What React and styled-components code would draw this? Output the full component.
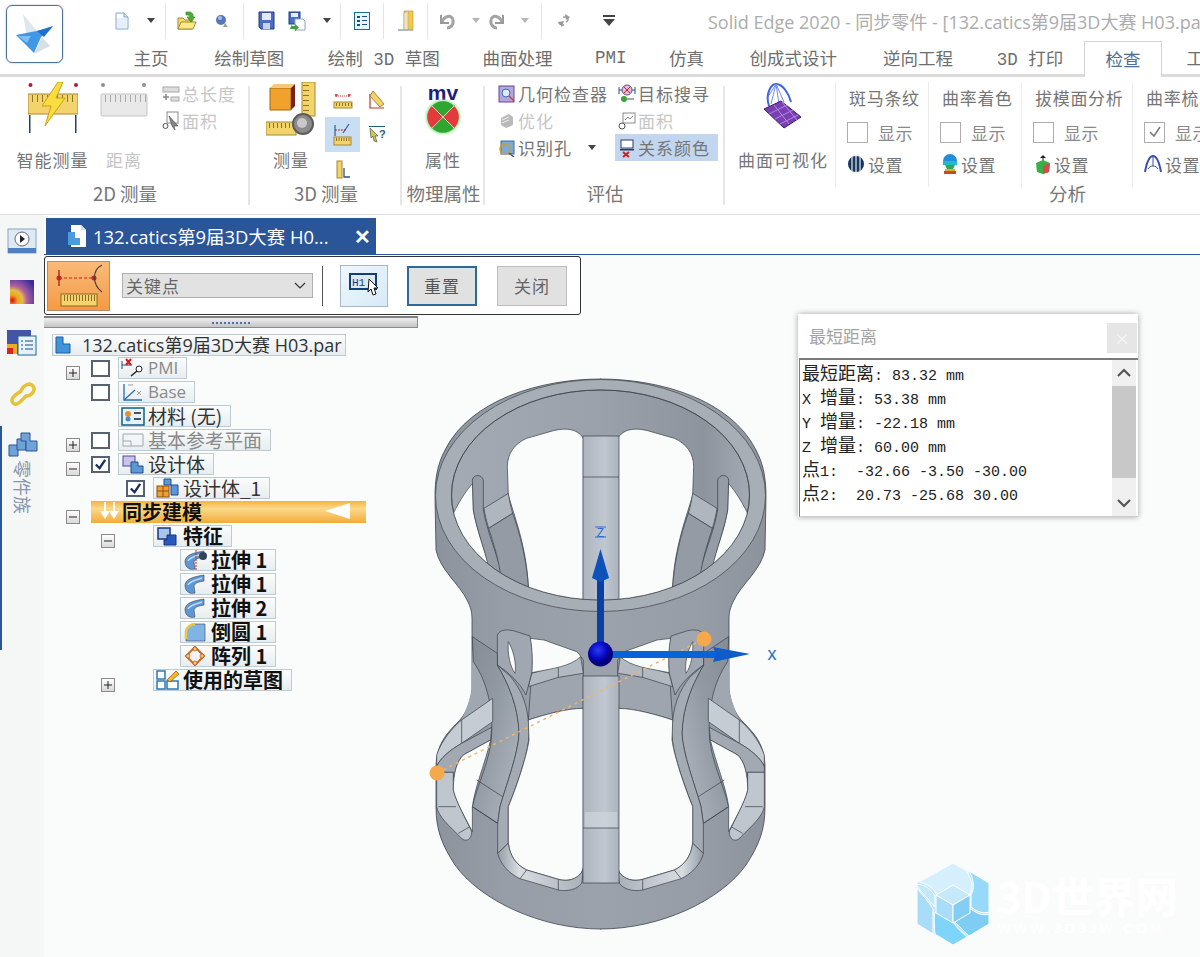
import React from 'react';
import styled, { createGlobalStyle } from 'styled-components';

const CJK = '"Noto Sans CJK SC", "Liberation Sans", sans-serif';
const MONO = '"Liberation Mono", "Noto Sans CJK SC", monospace';
const UI = '"Open Sans", "Noto Sans CJK SC", sans-serif';
const BG = '#fafcfc';

const Global = createGlobalStyle`
  html, body { margin: 0; padding: 0; background: #fff; }
  #root { width: 1200px; height: 957px; overflow: hidden; }
`;
const Page = styled.div`width:1200px;height:957px;overflow:hidden;display:flex;flex-direction:column;font-family:${CJK};background:#fff;`;

/* ---------- header ---------- */
const Header = styled.header`display:flex;height:74px;flex:none;background:#fff;`;
const Logo = styled.div`width:55px;height:56px;margin:5px 0 0 6px;border:1px solid #4d7096;border-radius:6px;box-shadow:0 0 2px #9db2c8;display:flex;align-items:center;justify-content:center;flex:none;`;
const HeaderMain = styled.div`flex:1;min-width:0;display:flex;flex-direction:column;`;
const QuickBar = styled.div`height:41px;display:flex;align-items:center;padding-left:45px;flex:none;white-space:nowrap;`;
const Slot = styled.div`width:${p => p.$w}px;height:32px;display:flex;align-items:center;justify-content:center;flex:none;`;
const Sep = styled.div`width:1px;height:36px;background:#e4e4e4;flex:none;`;
const Caret = styled.div`width:0;height:0;margin-left:${p => p.$ml || 0}px;border-left:4px solid transparent;border-right:4px solid transparent;border-top:5px solid ${p => p.$light ? '#b5b5b5' : '#444'};`;
const Title = styled.div`margin-left:76px;font:18px ${UI};color:#acacac;white-space:nowrap;`;
const Tabs = styled.nav`display:flex;height:33px;padding-left:48px;align-items:stretch;white-space:nowrap;`;
const Tab = styled.div`width:${p => p.$w}px;flex:none;display:flex;align-items:center;justify-content:center;font:17.5px ${MONO};color:${p => p.$on ? '#4a6f98' : '#6e6e6e'};background:#fff;
  ${p => p.$on ? 'border:1px solid #d4d4d4;border-bottom:0;margin-bottom:-3px;padding-bottom:2px;position:relative;z-index:1;box-sizing:border-box;' : ''}`;

/* ---------- ribbon ---------- */
const Ribbon = styled.section`height:137px;flex:none;display:flex;border-top:3px solid #dbdbdb;border-bottom:1px solid #dedede;background:#fff;`;
const Group = styled.div`width:${p => p.$w}px;flex:none;display:flex;flex-direction:column;position:relative;
  &::after{content:"";position:absolute;right:0;top:9px;bottom:9px;width:2px;background:${p => p.$last ? 'transparent' : '#e6e6e6'};}`;
const GroupBody = styled.div`flex:1;display:flex;min-height:0;`;
const GroupLabel = styled.div`height:36px;flex:none;padding-left:${p => p.$pl || 0}px;padding-bottom:6px;box-sizing:border-box;display:flex;align-items:center;justify-content:center;font-size:18.500px;color:#767676;`;
const Big = styled.div`width:${p => p.$w}px;margin-left:${p => p.$ml || 0}px;flex:none;display:flex;flex-direction:column;align-items:center;`;
const BigIcon = styled.div`height:70px;display:flex;align-items:flex-start;justify-content:center;padding-top:5px;box-sizing:border-box;`;
const BigText = styled.div`font-size:17px;line-height:24px;padding-top:1px;color:${p => p.$dim ? '#c4c4c4' : '#767676'};white-space:nowrap;letter-spacing:1px;`;
const SmallCol = styled.div`width:${p => p.$w}px;margin-left:${p => p.$ml || 0}px;flex:none;padding-top:3px;display:flex;flex-direction:column;`;
const SmallRow = styled.div`height:27px;width:${p => p.$hw ? p.$hw + 'px' : 'auto'};display:flex;align-items:center;gap:2px;font-size:17px;white-space:nowrap;letter-spacing:1px;color:${p => p.$dim ? '#c6c6c6' : '#757575'};background:${p => p.$on ? '#c2d6ef' : 'transparent'};padding-left:3px;box-sizing:border-box;`;
const IconSlot = styled.div`width:18px;height:20px;display:flex;align-items:center;justify-content:center;flex:none;`;
const MeasureGrid = styled.div`margin-left:9px;margin-top:5px;display:grid;grid-template-columns:35px 33px;grid-auto-rows:35px;`;
const MeasureCell = styled.div`display:flex;align-items:center;justify-content:center;background:${p => p.$on ? '#c9def3' : 'transparent'};`;
const SubCol = styled.div`width:${p => p.$w}px;flex:none;box-sizing:border-box;padding:4px 0 0 ${p => p.$pl || 11}px;border-left:1px solid #ececec;height:105px;margin-top:5px;overflow:hidden;`;
const SubTitle = styled.div`font-size:17px;line-height:24px;height:29px;padding-left:2px;color:#767676;white-space:nowrap;letter-spacing:.7px;`;
const CheckRow = styled.div`display:flex;align-items:center;height:24px;margin-top:5px;font-size:17px;color:#8a8a8a;gap:10px;white-space:nowrap;letter-spacing:.4px;`;
const RCheck = styled.div`width:19px;height:19px;border:1px solid #adadad;background:#fff;display:flex;align-items:center;justify-content:center;flex:none;`;
const SetRow = styled.div`display:flex;align-items:center;height:24px;margin-top:8px;font-size:17px;color:#767676;gap:3px;padding-left:${p => p.$pl || 0}px;white-space:nowrap;letter-spacing:.4px;`;

/* ---------- body ---------- */
const Body = styled.div`flex:1;min-height:0;display:flex;background:${BG};`;
const Side = styled.aside`width:44px;flex:none;background:#f5f6f6;display:flex;flex-direction:column;`;
const SideBtn = styled.div`height:51px;display:flex;align-items:center;justify-content:center;flex:none;`;
const SideFamily = styled.div`margin-top:7px;height:224px;border-left:2px solid #2b5797;display:flex;flex-direction:column;align-items:center;padding-top:6px;box-sizing:border-box;gap:2px;`;
const VText = styled.div`writing-mode:vertical-rl;text-orientation:sideways;font-size:18px;line-height:20px;color:#8596ad;`;
const Main = styled.main`flex:1;min-width:0;display:flex;flex-direction:column;`;
const DocBar = styled.div`height:40px;flex:none;background:#fff;display:flex;align-items:flex-end;padding-left:2px;border-bottom:1px solid #2a5598;box-sizing:border-box;`;
const DocTab = styled.div`width:330px;height:36px;background:#2a5598;display:flex;align-items:center;color:#fff;font:18.400px ${UI};white-space:nowrap;padding-left:21px;box-sizing:border-box;`;
const DocName = styled.span`margin-left:6px;width:240px;overflow:hidden;`;
const DocClose = styled.span`margin-left:auto;margin-right:5px;font-weight:700;font-size:20px;`;
const Viewport = styled.div`flex:1;position:relative;min-height:0;background:${BG};`;
const Toolbar = styled.div`position:relative;z-index:2;width:537px;height:59px;margin-top:1px;box-sizing:border-box;border:1px solid #333;border-radius:3px;background:#fff;display:flex;align-items:center;padding-left:2px;`;
const ToolMain = styled.div`width:63px;height:50px;background:linear-gradient(#f9bb7a,#f59a45);border:1px solid #b08c6c;box-sizing:border-box;display:flex;align-items:center;justify-content:center;flex:none;`;
const Select = styled.div`width:191px;height:25px;margin-left:12px;background:#e2e2e2;border:1px solid #afafaf;box-sizing:border-box;display:flex;align-items:center;justify-content:space-between;padding:0 6px 0 3px;font-size:17px;color:#666;flex:none;letter-spacing:1px;`;
const ToolSep = styled.div`width:1px;height:40px;background:#555;margin-left:9px;flex:none;`;
const ToolIcon = styled.div`width:48px;height:42px;margin-left:17px;box-sizing:border-box;background:linear-gradient(135deg,#eef7fd,#d8eaf7);border:1px solid #a9b7c4;display:flex;align-items:center;justify-content:center;flex:none;`;
const ToolBtn = styled.div`width:70px;height:40px;margin-left:${p => p.$ml}px;box-sizing:border-box;background:#e1e1e1;border:${p => p.$on ? '2px solid #2b6a9b' : '1px solid #bdbdbd'};display:flex;align-items:center;justify-content:center;font-size:17px;color:${p => p.$on ? '#555' : '#666'};flex:none;letter-spacing:1px;`;
const Splitter = styled.div`position:relative;z-index:2;width:374px;height:12px;margin-top:1px;box-sizing:border-box;background:linear-gradient(#f0f0f0,#c4c4c4);border-top:2px solid #7f7f7f;border-bottom:1px solid #8a8a8a;border-right:1px solid #8a8a8a;display:flex;align-items:center;justify-content:center;`;
const Grip = styled.div`width:38px;height:2px;background:repeating-linear-gradient(90deg,#4b70a8 0 2px,transparent 2px 4px);`;

const Tree = styled.div`position:relative;z-index:2;margin-top:5px;width:340px;`;
const Row = styled.div`display:flex;align-items:center;height:${p => p.$root ? 23 : 24}px;padding-left:${p => p.$in}px;white-space:nowrap;`;
const ExpSlot = styled.div`width:14px;height:14px;flex:none;margin-right:11px;`;
const CheckSlot = styled.div`width:19px;height:17px;flex:none;margin-right:8px;box-sizing:border-box;${p => p.$box ? 'border:2px solid #576270;background:#fff;display:flex;align-items:center;justify-content:center;' : ''}`;
const Node = styled.div`height:22px;box-sizing:border-box;display:flex;align-items:center;padding:0 ${p => p.$pr ?? 8}px 2px 2px;border:1px solid #bfcbd3;background:linear-gradient(#fbfcfc,#e8edef);gap:${p => p.$gap ?? 3}px;font-family:${p => p.$ui ? UI : CJK};font-size:${p => p.$fs || (p.$bold ? 20 : 19)}px;font-weight:${p => p.$bold ? 700 : 400};color:${p => p.$dim ? '#8a8a8a' : p.$bold ? '#111' : '#333'};`;
const NodeIcon = styled.span`display:flex;margin-bottom:-2px;flex:none;`;
const Banner = styled.div`width:275px;height:22px;background:linear-gradient(#f5b23e,#fbd98c 35%,#f3ab38);display:flex;align-items:center;padding:0 0 2px 8px;box-sizing:border-box;font-size:20px;font-weight:700;color:#111;gap:1px;`;
const BannerArrow = styled.div`margin-left:auto;margin-right:16px;width:0;height:0;border-top:8px solid transparent;border-bottom:8px solid transparent;border-right:25px solid #fff;`;

const Model = styled.svg`position:absolute;left:376px;top:115px;width:370px;height:575px;`;
const Watermark = styled.svg`position:absolute;left:873px;top:607px;width:283px;height:84px;`;

const Dialog = styled.div`position:absolute;left:754px;top:59px;width:340px;height:203px;background:#fff;box-shadow:0 0 6px rgba(0,0,0,.35);display:flex;flex-direction:column;z-index:3;`;
const DialogHead = styled.div`height:44px;flex:none;display:flex;align-items:center;justify-content:space-between;padding:0 1px 2px 11px;box-sizing:border-box;font-size:17px;color:#a3a3a3;`;
const DialogClose = styled.div`width:30px;height:30px;margin-top:5px;background:#e6e6e6;display:flex;align-items:center;justify-content:center;color:#f6f6f6;font-size:16px;`;
const DialogBody = styled.div`flex:1;min-height:0;margin-left:1px;display:flex;border-top:2px solid #7b7b7b;border-left:1px solid #7b7b7b;border-bottom:1px solid #ccc;`;
const Lines = styled.div`flex:1;padding:3px 0 0 2px;font:15px "Liberation Mono", monospace;color:#222;white-space:pre;`;
const Line = styled.div`height:24px;line-height:24px;overflow:visible;`;
const Han = styled.span`font:18px/1 ${CJK};vertical-align:baseline;`;
const Scroll = styled.div`width:24px;margin-right:2px;flex:none;background:#f0f0f0;display:flex;flex-direction:column;`;
const ScrollBtn = styled.div`height:26px;display:flex;align-items:center;justify-content:center;flex:none;`;
const ScrollThumb = styled.div`height:92px;background:#c8c8c8;flex:none;`;
const ScrollSpace = styled.div`flex:1;`;

/* ---------- icons ---------- */
const S = ({ w, h, children }) => <svg width={w} height={h} viewBox={`0 0 ${w} ${h}`}>{children}</svg>;
const rulerTicks = (x, y, n, st, h, c) => Array.from({ length: n }, (_, i) => <rect key={i} x={x + i * st} y={y} width="1" height={h} fill={c} />);

const LogoIcon = () => <S w={44} h={46}>
  <path d="M10 3 L24 20 L14 27Z" fill="#dfe6ee" /><path d="M3 24 L39 17 L28 26 L21 42Z" fill="#3f97e6" /><path d="M24 20 L40 15 L31 26Z" fill="#1f6fce" />
  <path d="M21 43 L29 26 L37 35Z" fill="#d6dee8" /><path d="M5 25 L18 25 L14 32Z" fill="#7cc0f4" /></S>;
const DocI = () => <S w={14} h={18}><path d="M1 1h8l4 4v12H1z" fill="#fff" stroke="#7ea6cf" /><path d="M9 1v4h4" fill="#cfe3f6" stroke="#7ea6cf" /><rect x="2" y="6" width="10" height="10" fill="#e6f0fa" /></S>;
const OpenI = () => <S w={20} h={20}><path d="M1 18V7h5l2 2h7v9z" fill="#f4d86c" stroke="#a68b2a" /><path d="M1 18l3-7h15l-3 7z" fill="#fbe98e" stroke="#a68b2a" /><path d="M9 1h4a4 4 0 0 1 3 5l2 0-4 5-4-5h3c0-2-2-2-4-2z" fill="#4caf32" stroke="#2a7a1a" strokeWidth=".6" /></S>;
const LinkI = () => <S w={14} h={16}><circle cx="6" cy="7" r="5" fill="#5577bb" /><circle cx="5" cy="5" r="2" fill="#a9c0e6" /><path d="M10 10l3 4H8z" fill="#9c9c9c" /></S>;
const SaveI = () => <S w={17} h={19}><path d="M1 1h15v17H3l-2-2z" fill="#4b6fc0" stroke="#1f3a80" /><rect x="4" y="2" width="9" height="7" fill="#dfe9f7" /><rect x="5" y="12" width="7" height="6" fill="#c8d3e8" /></S>;
const SaveAsI = () => <S w={18} h={20}><rect x="1" y="1" width="11" height="12" fill="#4b6fc0" stroke="#1f3a80" /><rect x="3" y="2" width="7" height="4" fill="#e6edf8" /><path d="M7 8h8l2 2v9H7z" fill="#fff" stroke="#8aa4c6" /><path d="M4 13v2h3v-2l4 3.500-4 3.500v-2H2z" fill="#3ca33a" /></S>;
const ListI = () => <S w={16} h={18}><rect x=".5" y=".5" width="15" height="17" fill="#e8f3fb" stroke="#1d6a8f" /><g fill="#1d4f7a"><rect x="3" y="4" width="3" height="2" /><rect x="8" y="4" width="5" height="1" /><rect x="3" y="8" width="3" height="2" /><rect x="8" y="8" width="5" height="1" /><rect x="3" y="12" width="3" height="2" /><rect x="8" y="12" width="5" height="1" /></g></S>;
const DoorI = () => <S w={18} h={22}><rect x="7" y="1" width="9" height="19" fill="#f5c84b" stroke="#b9902a" strokeWidth=".6" /><path d="M7 3l4-2v19H1h6z" fill="#efe6b7" stroke="#9a9a9a" strokeWidth=".5" /><path d="M1 20h15" stroke="#8aa2bd" /></S>;
const UndoI = ({ flip }) => <S w={18} h={18}><g transform={flip ? 'matrix(-1 0 0 1 18 0)' : ''}><path d="M3 3v8h8" fill="none" stroke="#999" strokeWidth="2" /><path d="M4 10C6 4 14 2 15 8c1 5-3 8-6 8" fill="none" stroke="#a3a3a3" strokeWidth="3" /></g></S>;
const BackI = () => <S w={16} h={16}><path d="M9 1l5 3-4 3zM2 9l6-1-2 6z" fill="#9a9a9a" /><path d="M7 4h4c2 2 1 4-1 5M8 12c-3 0-5-1-5-3" stroke="#9a9a9a" strokeWidth="1.500" fill="none" /></S>;
const MenuI = () => <S w={14} h={12}><rect x="1" y="0" width="12" height="2" fill="#444" /><path d="M1 4h12l-6 7z" fill="#444" /></S>;

const SmartI = () => <S w={50} h={52}>
  <circle cx="2.500" cy="3" r="2" fill="#b01a3a" /><circle cx="48" cy="3" r="2" fill="#b01a3a" />
  <rect x="0" y="12" width="50" height="20" fill="#f3d36b" stroke="#a58a35" />{rulerTicks(4, 13, 9, 5, 7, '#8d7526')}
  <path d="M30 0L14 24h9l-6 20 20-28h-9l7-16z" fill="#f9dc3e" stroke="#c9a21c" strokeWidth="1" />
  <rect x="1" y="33" width="1.500" height="18" fill="#22406e" /><rect x="47" y="33" width="1.500" height="18" fill="#22406e" /></S>;
const DistI = () => <S w={48} h={42}><circle cx="3" cy="3" r="2" fill="#8f8f8f" /><circle cx="44" cy="3" r="2" fill="#8f8f8f" /><rect x="1" y="12" width="46" height="22" rx="1" fill="#e9e9e9" stroke="#c5c5c5" />{rulerTicks(5, 13, 9, 5, 7, '#aaa')}</S>;
const TotalLenI = () => <S w={18} h={18}><rect x="1" y="2" width="16" height="5" fill="#ddd" stroke="#aaa" /><path d="M1 12h6m-3-3v6" stroke="#888" strokeWidth="1.500" /><rect x="9" y="12" width="8" height="4" fill="#ddd" stroke="#aaa" /></S>;
const AreaI = () => <S w={18} h={20}><rect x="5" y="1" width="11" height="11" fill="#fff" stroke="#8a8a8a" /><circle cx="3.500" cy="15" r="2.500" fill="#fff" stroke="#555" /><path d="M7 5l9 10-4 0 1 4-3-4z" fill="#888" stroke="#333" strokeWidth=".5" /></S>;
const MeasureBigI = () => <S w={50} h={56}>
  <rect x="36" y="0" width="13" height="34" fill="#f3d36b" stroke="#a58a35" />{Array.from({ length: 6 }, (_, i) => <rect key={i} x="37" y={3 + i * 5} width="6" height="1" fill="#8d7526" />)}
  <path d="M4 6h21v22H4z" fill="#f2a12d" stroke="#9a6a16" /><path d="M4 6l4-4h21l-4 4z" fill="#f6c978" /><path d="M25 6l4-4v22l-4 4z" fill="#7a1f1f" />
  <rect x="0" y="40" width="30" height="13" fill="#f3d36b" stroke="#a58a35" />{rulerTicks(3, 41, 6, 4, 5, '#8d7526')}
  <circle cx="37" cy="42" r="10" fill="#8c8c8c" stroke="#5b5b5b" strokeWidth="2" /><circle cx="36" cy="41" r="5" fill="#c9c9c9" /></S>;
const MiniA = () => <S w={20} h={18}><path d="M3 3v3M2 4h3M16 3v3M15 4h3" stroke="#b82222" /><path d="M3 5h14" stroke="#c33" strokeDasharray="1 1" /><rect x="1" y="11" width="18" height="6" fill="#f3d36b" stroke="#a58a35" />{rulerTicks(3, 12, 6, 3, 3, '#8d7526')}</S>;
const MiniB = () => <S w={18} h={20}><path d="M2 4v14h14" fill="none" stroke="#b63a2a" strokeWidth="1.200" /><path d="M5 1l11 13-4 3L2 6z" fill="#f3d36b" stroke="#a58a35" /></S>;
const MiniC = () => <S w={20} h={24}><path d="M2 2v11M16 1l-6 9" stroke="#2d5aa0" strokeWidth="1.200" /><path d="M2 7h12" stroke="#b82222" strokeDasharray="2 1" /><rect x="1" y="14" width="17" height="8" fill="#f3d36b" stroke="#a58a35" />{rulerTicks(3, 15, 6, 2.500, 3, '#8d7526')}</S>;
const MiniD = () => <S w={18} h={20}><rect x="1" y="1" width="16" height="1" fill="#1c5f80" /><path d="M2 3l8 8-3 0 2 6-3-1-1-5-2 2z" fill="#c9c94a" stroke="#444" strokeWidth=".6" /><text x="11" y="13" fontSize="11" fontWeight="700" fontFamily="Liberation Sans" fill="#1b5e86">?</text></S>;
const MiniE = () => <S w={16} h={20}><rect x="2" y="1" width="5" height="17" fill="#f3d36b" stroke="#a58a35" /><path d="M9 8v9h6" fill="none" stroke="#357" strokeWidth="1.300" /></S>;
const MvI = () => <S w={46} h={56}>
  <defs><radialGradient id="glow"><stop offset="75%" stopColor="#58d058" /><stop offset="100%" stopColor="#c8f0c8" stopOpacity=".1" /></radialGradient></defs>
  <text x="23" y="18" textAnchor="middle" fontSize="21" fontWeight="700" fontFamily="Liberation Sans" fill="#1d1d7a">mv</text>
  <circle cx="23" cy="35" r="19" fill="url(#glow)" />
  <path d="M23 35L12 24a15 15 0 0 1 22 0zM23 35L12 46a15 15 0 0 0 22 0z" fill="#2fa62f" /><path d="M23 35L12 24a15 15 0 0 0 0 22zM23 35L34 24a15 15 0 0 1 0 22z" fill="#e23b3b" /><path d="M12 24l22 22M34 24L12 46" stroke="#f0c8c0" strokeWidth="1" /></S>;
const GeomI = () => <S w={18} h={18}><rect x="1" y="1" width="15" height="16" fill="#b3a7db" stroke="#68458f" /><circle cx="8" cy="8" r="4" fill="#dfeaf7" stroke="#3a6db5" /><path d="M11 11l5 5" stroke="#c44" strokeWidth="1.500" /></S>;
const OptI = () => <S w={16} h={16}><path d="M2 5l8-4 4 3v8l-7 3-5-3z" fill="#b9b9b9" /><path d="M3 7l7-3M3 10l7-3" stroke="#eee" /></S>;
const HoleI = () => <S w={18} h={18}><rect x="3" y="2" width="13" height="13" fill="#7ea9d7" stroke="#3c6a9b" /><circle cx="7" cy="10" r="5" fill="none" stroke="#c9a030" strokeWidth="1.500" /><path d="M11 14l5 4" stroke="#555" strokeWidth="1.500" /></S>;
const SeekI = () => <S w={18} h={20}><path d="M1 3v7M17 3v7M1 6h16" stroke="#2a4f8a" /><circle cx="9" cy="6" r="5" fill="#d9c2d9" stroke="#6e4b8a" /><path d="M6 3l6 6M12 3L6 9" stroke="#c22" /><circle cx="6" cy="15" r="3" fill="#3ca33a" /><path d="M9 15h7" stroke="#555" /></S>;
const Area2I = () => <S w={18} h={18}><rect x="5" y="1" width="12" height="10" fill="#fff" stroke="#8a8a8a" /><path d="M7 8l3-3 2 2 3-3" stroke="#888" fill="none" /><circle cx="4" cy="14" r="3" fill="#fff" stroke="#555" /></S>;
const RelI = () => <S w={18} h={20}><rect x="3" y="2" width="12" height="8" fill="#fff" stroke="#2b3d66" /><rect x="2" y="11" width="14" height="1.500" fill="#2b3d66" /><path d="M5 14l6 5M11 14l-6 5" stroke="#c22" strokeWidth="2" /></S>;
const SurfI = () => <S w={42} h={50}>
  <path d="M7 24C3 12 9 2 14 2c7 0 13 10 15 18" fill="none" stroke="#3f62e0" strokeWidth="2" /><path d="M9 22L14 2l3 20M22 20L14 2M6 15l8-13" stroke="#6f8ae8" fill="none" />
  <path d="M2 27l17-8 20 16-17 11z" fill="#7a3fb2" stroke="#3a1a6e" /><path d="M7 32l18-9M13 37l18-9M18 42l18-9M12 23l15 19M20 20l15 18" stroke="#b28ad8" /></S>;
const ZebraI = () => <S w={18} h={18}><circle cx="9" cy="9" r="8" fill="#17375e" /><path d="M5 2v14M9 1v16M13 2v14" stroke="#e8eef6" strokeWidth="1.200" /></S>;
const CurvI = () => <S w={16} h={22}><path d="M1 8a7 7 0 0 1 14 0z" fill="#1e8fd8" /><rect x="1" y="8" width="14" height="4" fill="#27b8c8" /><path d="M3 12h10l-2 4H5z" fill="#2ca85a" /><rect x="3" y="16" width="10" height="2" fill="#e0b020" /><rect x="2" y="18" width="12" height="3" fill="#c43" /></S>;
const DraftI = () => <S w={16} h={20}><path d="M8 2v6" stroke="#222" /><path d="M5 4l3-3 3 3" fill="#222" /><path d="M1 9l7-3 7 3-1 9-6 2-6-2z" fill="#38b048" /><path d="M8 12l7-3-1 9-6 2z" fill="#d84a4a" /></S>;
const CombI = () => <S w={18} h={18}><path d="M1 17C3 6 6 1 9 1s6 5 8 16" fill="none" stroke="#3a4fa8" strokeWidth="2" /><path d="M4 14c2-4 8-4 10 0M9 1v10" stroke="#3a4fa8" fill="none" /></S>;
const Tick = ({ c = '#777', s = 14, w = 1.500 }) => <svg width={s} height={s} viewBox="0 0 14 14"><path d="M2 7l4 4 6-9" fill="none" stroke={c} strokeWidth={w} /></svg>;

const SPlay = () => <S w={30} h={26}><rect x="1" y="1" width="28" height="24" fill="#dfe9f4" stroke="#8aa3bd" /><circle cx="15" cy="11" r="7" fill="#fff" stroke="#667" /><path d="M13 7l5 4-5 4z" fill="#223" /><rect x="1" y="20" width="28" height="5" fill="#4f81bd" /></S>;
const SHeat = () => <svg width="24" height="24" viewBox="0 0 24 24"><defs><radialGradient id="heat" cx=".1" cy=".85" r="1.100"><stop offset="0" stopColor="#d8101c" /><stop offset=".2" stopColor="#f2a020" /><stop offset=".38" stopColor="#e0c040" /><stop offset=".55" stopColor="#b060a0" /><stop offset="1" stopColor="#3a2a9c" /></radialGradient></defs><rect width="24" height="24" fill="url(#heat)" /></svg>;
const SList = () => <S w={30} h={26}><rect x="0" y="0" width="24" height="24" fill="#4455a8" /><rect x="0" y="14" width="10" height="10" fill="#e8b020" /><rect x="0" y="18" width="6" height="6" fill="#d22" /><rect x="11" y="6" width="18" height="19" fill="#e6f1fb" stroke="#1d6a8f" /><path d="M14 11h2M18 11h8M14 15h2M18 15h8M14 19h2M18 19h8" stroke="#1d4f7a" /></S>;
const SKey = () => <S w={28} h={28}><path d="M5 23c-4-5 4-9 8-12 2-6 9-9 12-5s-1 10-7 10c-3 3-9 11-13 7z" fill="none" stroke="#e5c334" strokeWidth="3.500" /><circle cx="20" cy="11" r="2" fill="#f5f6f6" /></S>;
const SFam = () => <S w={30} h={26}><g fill="#6fa3d8" stroke="#2a5598"><path d="M1 13h9v11H1z" /><path d="M9 7h9v11H9z" /><path d="M13 1h9v8h7v10H18V9h-5z" /></g></S>;

const NRootI = () => <S w={16} h={18}><path d="M1 1h7v7h7v9H1z" fill="#3f94dc" stroke="#1c5f9a" /></S>;
const TabDocI = () => <S w={20} h={24}><path d="M4 1h10l5 5v17H4z" fill="#fff" /><path d="M14 1v5h5" fill="#cfe3f6" /><path d="M1 8h7v6h5v7H1z" fill="#4a9be0" /></S>;
const NPmi = () => <S w={24} h={20}><path d="M1 3v8M1 7h10" stroke="#2b4f7a" /><path d="M5 1l5 6M10 1L5 7" stroke="#d02020" strokeWidth="2" /><circle cx="18" cy="11" r="3" fill="#fff" stroke="#222" /><path d="M16 13l-6 5" stroke="#222" strokeWidth="1.500" /></S>;
const NBase = () => <S w={24} h={20}><path d="M3 2v16h18" fill="none" stroke="#2d6ea8" strokeWidth="1.300" /><path d="M3 18L14 8" stroke="#2d6ea8" strokeWidth="1.300" /><path d="M7 3h5M16 9l4 4M20 9l-4 4" stroke="#99a" /></S>;
const NMat = () => <S w={24} h={19}><rect x="1" y="1" width="22" height="17" fill="#e6f2f9" stroke="#12607c" strokeWidth="1.500" /><circle cx="7" cy="7" r="3" fill="#e8912c" /><circle cx="7" cy="12" r="2.500" fill="#4b8bd0" /><path d="M13 6h7M13 12h7" stroke="#123" strokeWidth="1.500" /></S>;
const NPlane = () => <S w={24} h={18}><path d="M2 3h20v12H2z" fill="#f2f5f7" stroke="#a0a8b0" /><path d="M2 10h8v5" stroke="#a0a8b0" fill="none" /></S>;
const NBody = () => <S w={24} h={20}><rect x="2" y="2" width="12" height="10" fill="#c8c4ea" stroke="#4a4a9a" /><path d="M10 8h7v4h5v7H10z" fill="#5d97d6" stroke="#1d4f8f" /></S>;
const NBody1 = () => <S w={24} h={20}><path d="M8 1h7v6h7v10h-7V7H8z" fill="#5d97d6" stroke="#1d4f8f" /><rect x="1" y="8" width="12" height="11" fill="#f0a030" stroke="#8a5010" /><path d="M7 8v11M1 13h12" stroke="#8a5010" /></S>;
const NSync = () => <S w={22} h={20}><g fill="#fff"><rect x="5" y="1" width="2" height="10" /><rect x="14" y="1" width="2" height="10" /><path d="M1 10h10l-5 8zM10 10h10l-5 8z" /></g></S>;
const NFeat = () => <S w={22} h={20}><rect x="2" y="2" width="12" height="11" fill="#a8c6ea" stroke="#14348a" strokeWidth="1.500" /><path d="M11 9h9v10H8v-5h3z" fill="#2a58b8" stroke="#14348a" /></S>;
const NPipe = ({ cut }) => <S w={24} h={20}><path d="M2 11C3 5 9 3 21 1v6c-6 1-9 2-10 5l1 7c-4 1-10 0-10-8z" fill="#5d97d6" stroke="#445" strokeWidth=".6" /><path d="M5 11c1-3 5-4 14-7" stroke="#c9def3" strokeWidth="1.500" fill="none" />{cut && <path d="M13 0v20" stroke="#c22" strokeDasharray="2 1" />}{cut && <circle cx="20" cy="6" r="4" fill="#345" />}</S>;
const NRound = () => <S w={24} h={20}><path d="M3 19V9C4 5 8 2 12 2h10v17z" fill="#7fb4e4" stroke="#445" strokeWidth=".6" /><path d="M3 17V9C4 5 8 2 12 2" fill="none" stroke="#e8c840" strokeWidth="2.500" /></S>;
const NPat = () => <S w={24} h={20}><path d="M12 1l9 9-9 9-9-9z" fill="none" stroke="#d06a20" strokeWidth="2" /><g fill="#f2c078" stroke="#a04a10" strokeWidth=".6"><circle cx="12" cy="3" r="2" /><circle cx="12" cy="17" r="2" /><circle cx="5" cy="10" r="2" /><circle cx="19" cy="10" r="2" /></g></S>;
const NSketch = () => <S w={24} h={20}><path d="M1 1h8v8H1zM1 11h8v8H1zM11 11h11v8H11z" fill="#fff" stroke="#2a7ab8" strokeWidth="1.500" /><path d="M11 10L20 1l3 3-9 8z" fill="#e8c020" stroke="#a02020" strokeWidth=".6" /></S>;

const Expander = ({ open }) => <ExpSlot><svg width="14" height="14" viewBox="0 0 14 14"><defs><linearGradient id="exg" x2="0" y2="1"><stop offset="0" stopColor="#fff" /><stop offset="1" stopColor="#d8d8d8" /></linearGradient></defs><rect x=".5" y=".5" width="13" height="13" fill="url(#exg)" stroke="#8a8a8a" /><rect x="3" y="6.500" width="8" height="1" fill="#222" />{!open && <rect x="6.500" y="3" width="1" height="8" fill="#222" />}</svg></ExpSlot>;
const TreeCheck = ({ on }) => <CheckSlot $box>{on && <Tick c="#16305e" s={13} w={2.500} />}</CheckSlot>;
const TreeNode = ({ icon, children, ...rest }) => <Node {...rest}><NodeIcon>{icon}</NodeIcon>{children}</Node>;

/* ---------- model ---------- */
const Half = () => <path d="M601 379C540 379 470 400 445 450C437 465 435 480 435 497L436 550C440 570 460 585 467 600C471 608 472 612 472 620L472 690C470 705 465 715 458 722C445 735 437 745 436 765L436 807C436 830 442 845 455 865C480 900 540 929 601 929" fill="url(#mBody)" stroke="#3d434b" strokeWidth=".8" />;
const l = { stroke: '#3a4048', strokeWidth: 2.100 };
const BackHalf = () => <g transform="translate(420 370) scale(.33333)" {...l}>
  <path d="M490 205C470 172 430 175 400 182L320 205C285 220 262 250 262 290L265 375C280 430 320 530 325 650L320 720L490 720Z" fill={BG} />
  <path d="M100 430C120 390 140 360 158 340L160 420C170 480 195 540 208 590L208 640L80 640L80 430Z" fill={BG} />
  <path d="M157 330C160 312 185 312 190 330L190 420C200 480 230 550 245 610L245 640L208 640L205 590C195 540 170 480 160 420Z" fill="#959ca6" />
  <path d="M192 415L265 370C268 390 272 410 278 430L206 475C200 455 195 435 192 415Z" fill="#b0b6be" />
  <path d="M206 475L278 430C300 490 320 570 325 650L325 680L245 640C238 570 220 520 206 475Z" fill="#949ba5" />
</g>;
const FrontHalf = () => <g transform="translate(420 640) scale(.33333)" {...l}>
  <path d="M155 150C150 180 135 215 125 240L218 175L205 130L157 30Z" fill="#a1a7b0" stroke="none" />
  <path d="M335 100L415 80L482 50L490 60L490 205C440 205 370 225 325 240Z" fill="#9ea5ae" />
  <path d="M335 100L415 78L482 50L490 100L415 112L325 140Z" fill="#b3b9c0" />
  <path d="M415 78V112" />
  <path d="M372 0L470 35C478 42 482 48 482 50C450 80 400 85 335 98C337 60 335 30 330 -5Z" fill={BG} />
  <path d="M232 -15C240 -32 260 -32 280 -28L330 -12C338 30 338 70 335 100L318 165C300 130 270 100 232 75Z" fill="#a0a7b0" />
  <path d="M265 5C262 40 270 80 285 100C290 70 280 30 265 5Z" fill={BG} />
  <path d="M157 -10L232 40V75C265 130 295 200 297 280C295 340 260 430 240 500L233 550L157 500C170 440 215 350 215 280C218 210 205 130 160 65Z" fill="url(#mStrip)" />
  <path d="M50 345C65 300 100 260 125 240L218 175L218 245L125 310C90 330 60 355 50 380Z" fill="#c6ccd3" />
  <path d="M125 240V310" />
  <path d="M50 380C60 355 90 330 125 310L215 262L212 300L130 345C110 365 100 400 100 450L100 397L50 397Z" fill="#a3a9b2" />
  <path d="M50 397H100V450C110 490 140 540 155 575C155 600 135 610 120 590C90 560 55 530 50 500Z" fill="#c0c6cd" />
  <path d="M55 500H108M115 580L150 560" />
  <path d="M100 450C100 400 110 365 130 345L212 300C195 370 165 440 157 500L157 575C140 540 110 490 100 450Z" fill={BG} />
  <path d="M272 110C305 150 327 200 327 280C327 330 300 410 265 500L265 610L233 640L233 550L240 500C260 430 295 340 297 280C295 200 265 130 232 75Z" fill="#a4abb3" />
  <path d="M170 420L248 470M157 500L233 550" />
  <path d="M490 205C440 205 370 225 325 240L327 300C320 350 290 440 265 500L265 610C270 650 290 675 320 690L415 718C440 725 485 720 490 680Z" fill={BG} />
  <path d="M233 640L265 610C270 650 290 675 320 690L415 718C440 725 470 722 490 690L485 730C470 750 440 755 415 750L300 716C265 700 240 670 233 640Z" fill="url(#mLit)" />
  <path d="M300 716L320 690M415 718V750" />
</g>;
const ModelView = () => <Model viewBox="420 370 370 575">
  <defs>
    <linearGradient id="mBody" gradientUnits="userSpaceOnUse" x1="435" x2="601" y1="0" y2="0"><stop offset="0" stopColor="#8c939d" /><stop offset=".4" stopColor="#969da7" /><stop offset="1" stopColor="#9ba2ac" /></linearGradient>
    <linearGradient id="mWall" x1="0" x2="1" y1="0" y2="0"><stop offset="0" stopColor="#a4aab3" /><stop offset=".5" stopColor="#9aa1ab" /><stop offset=".85" stopColor="#8d949e" /><stop offset="1" stopColor="#a4aab3" /></linearGradient>
    <linearGradient id="mStrip" x1="0" x2="1" y1="0" y2="1"><stop offset="0" stopColor="#858c96" /><stop offset=".45" stopColor="#929aa3" /><stop offset="1" stopColor="#b4bac2" /></linearGradient>
    <linearGradient id="mLit" x1="0" x2="1"><stop offset="0" stopColor="#959ca6" /><stop offset=".25" stopColor="#d8dde2" /><stop offset="1" stopColor="#aab0b8" /></linearGradient>
    <linearGradient id="mCol" x1="0" x2="1"><stop offset="0" stopColor="#aeb5bf" /><stop offset=".6" stopColor="#c0c7d1" /><stop offset="1" stopColor="#acb3bd" /></linearGradient>
    <radialGradient id="mBall" cx=".4" cy=".35"><stop offset="0" stopColor="#2a3cf0" /><stop offset=".7" stopColor="#0505c0" /><stop offset="1" stopColor="#00007a" /></radialGradient>
    <clipPath id="mInner"><ellipse cx="600.500" cy="495" rx="149" ry="105" /></clipPath>
  </defs>
  <Half /><g transform="matrix(-1 0 0 1 1201 0)"><Half /></g>
  <FrontHalf /><g transform="matrix(-1 0 0 1 1201 0)"><FrontHalf /></g>
  <rect x="583" y="676" width="36" height="207" fill="url(#mCol)" stroke="#3a4048" strokeWidth=".7" />
  <rect x="585" y="812" width="32" height="16" fill="#d2d8df" opacity=".6" />
  <path d="M583 828H619" stroke="#3a4048" strokeWidth=".7" />
  <ellipse cx="600.500" cy="495.500" rx="165" ry="116" fill="#a8aeb6" stroke="#3d434b" strokeWidth=".7" />
  <ellipse cx="600.500" cy="495" rx="149" ry="105" fill="url(#mWall)" stroke="#3d434b" strokeWidth=".7" />
  <g clipPath="url(#mInner)">
    <BackHalf /><g transform="matrix(-1 0 0 1 1201 0)"><BackHalf /></g>
    <rect x="583" y="436" width="36" height="170" fill="url(#mCol)" stroke="#3a4048" strokeWidth=".7" />
    <path d="M583 477H619" stroke="#3a4048" strokeWidth=".7" />
  </g>
  <ellipse cx="600.500" cy="495" rx="149" ry="105" fill="none" stroke="#3d434b" strokeWidth=".7" />
  <path d="M437 773L704 639" stroke="#f0b668" strokeWidth="1.500" strokeDasharray="3 4" />
  <circle cx="437" cy="773" r="7.500" fill="#f6a94a" /><circle cx="704" cy="639" r="7.500" fill="#f6a94a" />
  <rect x="597" y="575" width="7" height="75" fill="#0b3fa6" />
  <path d="M600.500 549L592 578L600.500 582L609 578Z" fill="#0d52b8" />
  <rect x="610" y="651" width="110" height="7" fill="#0a62d8" />
  <path d="M750 654L713 647L716 654L713 662Z" fill="#0d5cc8" />
  <circle cx="600.500" cy="654" r="12.500" fill="url(#mBall)" />
  <path d="M595 527H606M595 537H606" stroke="#2a70d8" strokeWidth="1.200" />
  <text x="600.500" y="537" textAnchor="middle" fontSize="12" fontFamily="Liberation Sans" fill="#2a70d8">Z</text>
  <text x="772" y="660" textAnchor="middle" fontSize="18" fontFamily="Liberation Sans" fill="#1f6fc0">x</text>
</Model>;

const WatermarkView = () => <Watermark viewBox="0 0 283 84">
  <path d="M36 1L72 21V62L36 83L0 62V21Z" fill="#bfe6fa" />
  <path d="M2 20L36 1L50 9C56 20 56 27 53 33L36 23L20 33C16 25 10 22 2 20Z" fill="#d6effc" stroke="#fff" />
  <path d="M52 9L72 21V50C67 52 60 50 54 45V33C58 26 57 17 52 9Z" fill="#97d9f9" stroke="#fff" />
  <path d="M72 52V62L52 74C46 68 42 64 38 60L54 47C60 52 67 54 72 52Z" fill="#7fcdf3" stroke="#fff" />
  <path d="M50 75L36 83L18 72C17 62 17 55 18 50L36 60C40 66 45 71 50 75Z" fill="#7fd4f9" stroke="#fff" />
  <path d="M0 62V26C6 34 12 40 16 47V72Z" fill="#a9ddf7" stroke="#fff" />
  <path d="M0 22C8 23 14 27 18 34V45C12 38 6 32 0 24Z" fill="#c2e8fb" stroke="#fff" />
  <path d="M36 23L53 33L36 43L19 33Z" fill="#c5e8fb" stroke="#fff" /><path d="M19 33L36 43V61L19 51Z" fill="#a8dcf8" stroke="#fff" /><path d="M53 33V51L36 61V43Z" fill="#84cdf3" stroke="#fff" />
  <text x="80" y="51" fontSize="42" fontWeight="700" fontFamily="Noto Sans CJK SC" fill="#ffffff">3D世界网</text>
  <text x="81" y="71" fontSize="13" fontFamily="Liberation Sans" letterSpacing="4" fill="#ffffff">WWW.3D3JW.COM</text>
</Watermark>;

const tabs = [['主页', 80], ['绘制草图', 116.5], ['绘制 3D 草图', 152.5], ['曲面处理', 115], ['PMI', 71.5], ['仿真', 80], ['创成式设计', 133.5], ['逆向工程', 116], ['3D 打印', 108]];
const Sub = ({ w, title, icon, checked, spl }) => <SubCol $w={w}>
  <SubTitle>{title}</SubTitle>
  <CheckRow><RCheck>{checked && <Tick />}</RCheck>显示</CheckRow>
  <SetRow $pl={spl}>{icon}设置</SetRow>
</SubCol>;

export default function App() {
  return <Page><Global />
    <Header>
      <Logo><LogoIcon /></Logo>
      <HeaderMain>
        <QuickBar>
          <Slot $w={28}><DocI /></Slot><Slot $w={29}><Caret /></Slot><Sep />
          <Slot $w={42}><OpenI /></Slot><Slot $w={28}><LinkI /></Slot><Slot $w={7} /><Sep /><Slot $w={8} />
          <Slot $w={28}><SaveI /></Slot><Slot $w={34}><SaveAsI /></Slot><Slot $w={26}><Caret /></Slot><Sep />
          <Slot $w={42}><ListI /></Slot><Sep /><Slot $w={43}><DoorI /></Slot><Sep />
          <Slot $w={38}><UndoI /></Slot><Slot $w={20}><Caret $light /></Slot><Slot $w={22}><UndoI flip /></Slot><Slot $w={33}><Caret $light /></Slot><Sep />
          <Slot $w={44}><BackI /></Slot><Slot $w={46}><MenuI /></Slot>
          <Title>Solid Edge 2020 - 同步零件 - [132.catics第9届3D大赛 H03.par</Title>
        </QuickBar>
        <Tabs>
          {tabs.map(([t, w]) => <Tab key={t} $w={w}>{t}</Tab>)}
          <Tab $w={78} $on>检查</Tab>
          <Tab $w={84}>工具</Tab>
        </Tabs>
      </HeaderMain>
    </Header>

    <Ribbon>
      <Group $w={250}>
        <GroupBody>
          <Big $w={71} $ml={17}><BigIcon><SmartI /></BigIcon><BigText>智能测量</BigText></Big>
          <Big $w={48} $ml={12}><BigIcon><DistI /></BigIcon><BigText $dim>距离</BigText></Big>
          <SmallCol $w={90} $ml={11}>
            <SmallRow $dim><IconSlot><TotalLenI /></IconSlot>总长度</SmallRow>
            <SmallRow $dim><IconSlot><AreaI /></IconSlot>面积</SmallRow>
          </SmallCol>
        </GroupBody>
        <GroupLabel>2D 测量</GroupLabel>
      </Group>
      <Group $w={152}>
        <GroupBody>
          <Big $w={50} $ml={16}><BigIcon><MeasureBigI /></BigIcon><BigText>测量</BigText></Big>
          <MeasureGrid>
            <MeasureCell><MiniA /></MeasureCell><MeasureCell><MiniB /></MeasureCell>
            <MeasureCell $on><MiniC /></MeasureCell><MeasureCell><MiniD /></MeasureCell>
            <MeasureCell><MiniE /></MeasureCell>
          </MeasureGrid>
        </GroupBody>
        <GroupLabel>3D 测量</GroupLabel>
      </Group>
      <Group $w={83}>
        <GroupBody><Big $w={82}><BigIcon><MvI /></BigIcon><BigText>属性</BigText></Big></GroupBody>
        <GroupLabel>物理属性</GroupLabel>
      </Group>
      <Group $w={240}>
        <GroupBody>
          <SmallCol $w={120} $ml={10}>
            <SmallRow><IconSlot><GeomI /></IconSlot>几何检查器</SmallRow>
            <SmallRow $dim><IconSlot><OptI /></IconSlot>优化</SmallRow>
            <SmallRow><IconSlot><HoleI /></IconSlot>识别孔<Caret $ml={14} /></SmallRow>
          </SmallCol>
          <SmallCol $w={105}>
            <SmallRow><IconSlot><SeekI /></IconSlot>目标搜寻</SmallRow>
            <SmallRow $dim><IconSlot><Area2I /></IconSlot>面积</SmallRow>
            <SmallRow $on $hw={103}><IconSlot><RelI /></IconSlot>关系颜色</SmallRow>
          </SmallCol>
        </GroupBody>
        <GroupLabel>评估</GroupLabel>
      </Group>
      <Group $w={475} $last>
        <GroupBody>
          <Big $w={104} $ml={6}><BigIcon><SurfI /></BigIcon><BigText>曲面可视化</BigText></Big>
          <Sub w={93} title="斑马条纹" icon={<ZebraI />} spl={0} />
          <Sub w={93} title="曲率着色" icon={<CurvI />} spl={2} />
          <Sub w={111} title="拔模面分析" icon={<DraftI />} spl={2} />
          <Sub w={68} title="曲率梳" icon={<CombI />} checked spl={0} />
        </GroupBody>
        <GroupLabel $pl={210}>分析</GroupLabel>
      </Group>
    </Ribbon>

    <Body>
      <Side>
        <SideBtn><SPlay /></SideBtn><SideBtn><SHeat /></SideBtn><SideBtn><SList /></SideBtn><SideBtn><SKey /></SideBtn>
        <SideFamily><SFam /><VText>零件族</VText></SideFamily>
      </Side>
      <Main>
        <DocBar><DocTab><TabDocI /><DocName>132.catics第9届3D大赛 H0...</DocName><DocClose>✕</DocClose></DocTab></DocBar>
        <Viewport>
          <ModelView />
          <WatermarkView />
          <Toolbar>
            <ToolMain><S w={54} h={44}><path d="M7 6v16" stroke="#8a1a1a" strokeWidth="1.200" /><path d="M7 14h36" stroke="#c22" strokeDasharray="3 2" /><circle cx="7" cy="14" r="2.500" fill="#c22" /><circle cx="42" cy="14" r="2.500" fill="#c22" /><path d="M50 1C40 6 40 20 50 28" fill="none" stroke="#444" strokeWidth="1.200" /><rect x="9" y="30" width="36" height="12" fill="#f3d36b" stroke="#8d6a25" />{rulerTicks(12, 31, 11, 3, 6, '#8d6a25')}</S></ToolMain>
            <Select>关键点<svg width="12" height="8" viewBox="0 0 12 8"><path d="M1 1l5 5 5-5" fill="none" stroke="#333" strokeWidth="1.200" /></svg></Select>
            <ToolSep />
            <ToolIcon><S w={30} h={28}><rect x="1" y="2" width="26" height="15" fill="#dce8f4" stroke="#123f7a" strokeWidth="2" /><text x="3" y="14" fontSize="11" fontFamily="Liberation Mono" fill="#123f7a">H1</text><path d="M20 7l9 9-4 0 2 6-3 1-2-6-3 3z" fill="#fff" stroke="#111" /></S></ToolIcon>
            <ToolBtn $ml={19} $on>重置</ToolBtn>
            <ToolBtn $ml={20}>关闭</ToolBtn>
          </Toolbar>
          <Splitter><Grip /></Splitter>
          <Tree>
            <Row $root $in={8}><TreeNode $ui $fs={18} $pr={3} $gap={11} icon={<NRootI />}>132.catics第9届3D大赛 H03.par</TreeNode></Row>
            <Row $in={22}><Expander /><TreeCheck /><TreeNode $ui $dim $fs={17} icon={<NPmi />}>PMI</TreeNode></Row>
            <Row $in={47}><TreeCheck /><TreeNode $ui $dim $fs={17} icon={<NBase />}>Base</TreeNode></Row>
            <Row $in={74}><TreeNode icon={<NMat />}>材料 (无)</TreeNode></Row>
            <Row $in={22}><Expander /><TreeCheck /><TreeNode $dim icon={<NPlane />}>基本参考平面</TreeNode></Row>
            <Row $in={22}><Expander open /><TreeCheck on /><TreeNode icon={<NBody />}>设计体</TreeNode></Row>
            <Row $in={82}><TreeCheck on /><TreeNode icon={<NBody1 />}>设计体_1</TreeNode></Row>
            <Row $in={22}><Expander open /><Banner><NSync />同步建模<BannerArrow /></Banner></Row>
            <Row $in={57}><Expander open /><CheckSlot /><TreeNode $bold $gap={5} icon={<NFeat />}>特征</TreeNode></Row>
            <Row $in={136}><TreeNode $bold $gap={4} icon={<NPipe cut />}>拉伸 1</TreeNode></Row>
            <Row $in={136}><TreeNode $bold $gap={4} icon={<NPipe />}>拉伸 1</TreeNode></Row>
            <Row $in={136}><TreeNode $bold $gap={4} icon={<NPipe />}>拉伸 2</TreeNode></Row>
            <Row $in={136}><TreeNode $bold $gap={4} icon={<NRound />}>倒圆 1</TreeNode></Row>
            <Row $in={136}><TreeNode $bold $gap={4} icon={<NPat />}>阵列 1</TreeNode></Row>
            <Row $in={57}><Expander /><CheckSlot /><TreeNode $bold icon={<NSketch />}>使用的草图</TreeNode></Row>
          </Tree>
          <Dialog>
            <DialogHead>最短距离<DialogClose>×</DialogClose></DialogHead>
            <DialogBody>
              <Lines>
                <Line><Han>最短距离</Han>: 83.32 mm</Line>
                <Line>X <Han>增量</Han>: 53.38 mm</Line>
                <Line>Y <Han>增量</Han>: -22.18 mm</Line>
                <Line>Z <Han>增量</Han>: 60.00 mm</Line>
                <Line><Han>点</Han>1:  -32.66 -3.50 -30.00</Line>
                <Line><Han>点</Han>2:  20.73 -25.68 30.00</Line>
              </Lines>
              <Scroll>
                <ScrollBtn><svg width="14" height="10" viewBox="0 0 14 10"><path d="M1 8l6-6 6 6" fill="none" stroke="#555" strokeWidth="2.200" /></svg></ScrollBtn>
                <ScrollThumb />
                <ScrollSpace />
                <ScrollBtn><svg width="14" height="10" viewBox="0 0 14 10"><path d="M1 2l6 6 6-6" fill="none" stroke="#555" strokeWidth="2.200" /></svg></ScrollBtn>
              </Scroll>
            </DialogBody>
          </Dialog>
        </Viewport>
      </Main>
    </Body>
  </Page>;
}
